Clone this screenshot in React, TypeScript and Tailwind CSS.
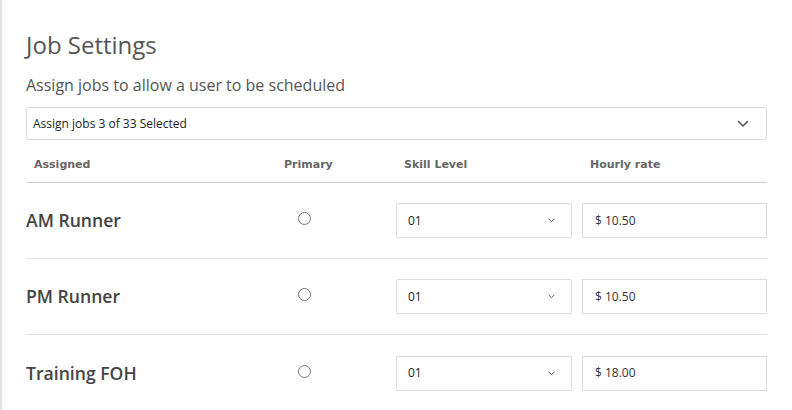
import React from "react";

const jobs = [
  { name: "AM Runner", level: "01", rate: "$ 10.50" },
  { name: "PM Runner", level: "01", rate: "$ 10.50" },
  { name: "Training FOH", level: "01", rate: "$ 18.00" },
];

function Chevron({ className }: { className?: string }) {
  return (
    <svg viewBox="0 0 12 8" className={className} fill="none" stroke="currentColor" strokeWidth="1.6" strokeLinecap="round" strokeLinejoin="round">
      <path d="M1.5 1.5 L6 6 L10.5 1.5" />
    </svg>
  );
}

export default function App() {
  return (
    <div className="w-[792px] h-[410px] overflow-hidden bg-white border-l-2 border-[#e3e3e3]" style={{ fontFamily: '"Open Sans", "Liberation Sans", sans-serif' }}>
      <div className="pl-[24px] pr-[25px] pt-[28px]">
        <h1 className="text-[24px] leading-[33px] text-[#555] font-normal">Job Settings</h1>
        <p className="mt-[13px] text-[16px] leading-[22px] text-[#555]">Assign jobs to allow a user to be scheduled</p>
        <div className="mt-[11px] h-[33px] border border-[#d9d9d9] rounded-[3px] flex items-center justify-between pl-[6px] pr-[17px]">
          <span className="text-[12px] text-[#222]">Assign jobs 3 of 33 Selected</span>
          <Chevron className="w-[12px] h-[8px] text-[#555]" />
        </div>
        <div
          className="grid grid-cols-[252px_118px_186px_185px] border-b border-[#cfcfcf] pt-[18px] pb-[10px] text-[11px] leading-[14px] font-bold text-[#666]"
          style={{ fontFamily: '"DejaVu Sans", Verdana, sans-serif' }}
        >
          <div className="pl-[8px]">Assigned</div>
          <div className="pl-[6px]">Primary</div>
          <div className="pl-[8px]">Skill Level</div>
          <div className="pl-[8px]">Hourly rate</div>
        </div>
        {jobs.map((j, i) => (
          <div key={j.name} className={`grid grid-cols-[252px_118px_186px_185px] items-center h-[76px] ${i < jobs.length - 1 ? "border-b border-[#e2e2e2]" : ""}`}>
            <div className="text-[17.6px] font-semibold text-[#444]">{j.name}</div>
            <div className="pl-[20px] pb-[4px]">
              <div className="w-[13px] h-[13px] rounded-full border border-[#777]" />
            </div>
            <div className="pr-[10px]">
              <div className="h-[35px] border border-[#dcdcdc] rounded-[2px] flex items-center justify-between pl-[11px] pr-[16px]">
                <span className="text-[12px] text-[#222]">{j.level}</span>
                <Chevron className="w-[7px] h-[5px] text-[#555]" />
              </div>
            </div>
            <div className="h-[35px] border border-[#dcdcdc] flex items-center pl-[12px]">
              <span className="text-[12px] text-[#333]">{j.rate}</span>
            </div>
          </div>
        ))}
      </div>
    </div>
  );
}
